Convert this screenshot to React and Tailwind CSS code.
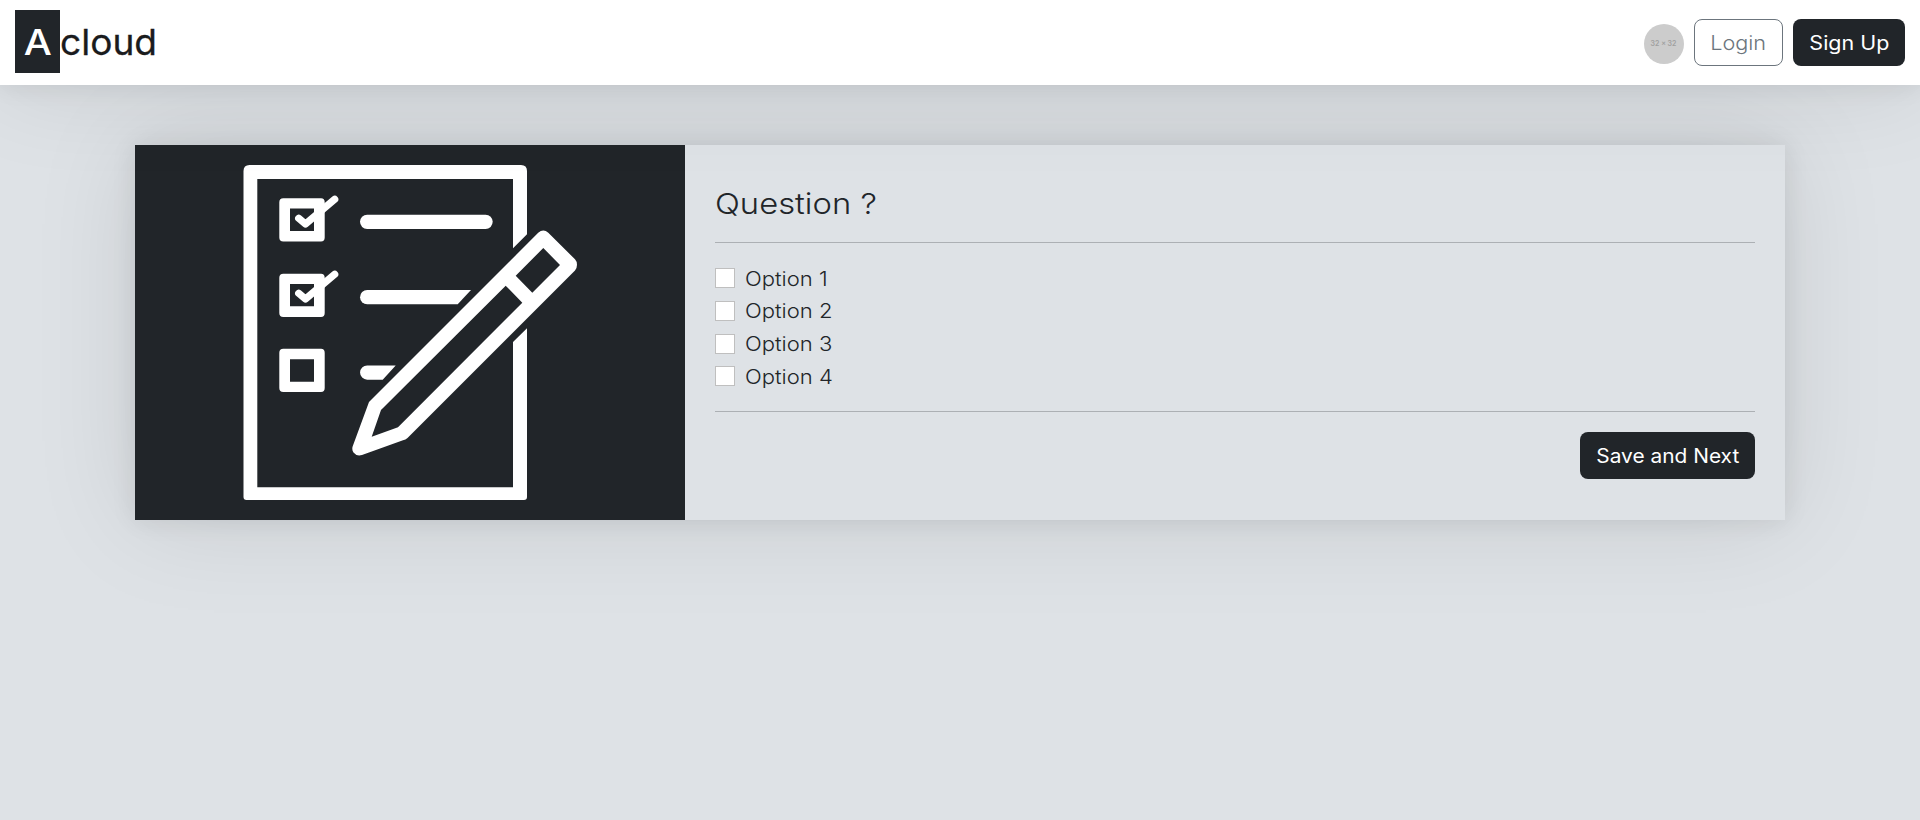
const options = ["Option 1", "Option 2", "Option 3", "Option 4"];

const SHADOW = "shadow-[0_0_24px_rgba(0,0,0,0.09),0_0_100px_rgba(0,0,0,0.10)]";

function Checklist() {
  return (
    <svg className="block h-[375px] w-[550px]" viewBox="135 145 550 375" fill="#fff">
      <path d="M249.500 165H521Q527 165 527 171V234.300L513 248.300V179H257.300V487.300H513V342L527 328.300V497Q527 500 524 500H246.500Q243.500 500 243.500 497V171Q243.500 165 249.500 165Z" />
      <g fillRule="evenodd">
        <path d="M283.300 198.300H321Q324.700 198.300 324.700 202.300V237.500Q324.700 241.500 321 241.500H283.300Q279.300 241.500 279.300 237.500V202.300Q279.300 198.300 283.300 198.300ZM290 208.500V231H314V208.500Z" />
        <path d="M283.300 273.700H321Q324.700 273.700 324.700 277.700V312.900Q324.700 316.900 321 316.900H283.300Q279.300 316.900 279.300 312.900V277.700Q279.300 273.700 283.300 273.700ZM290 284V306.200H314V284Z" />
        <path d="M283.300 348.700H321Q324.700 348.700 324.700 352.700V388.100Q324.700 392.100 321 392.100H283.300Q279.300 392.100 279.300 388.100V352.700Q279.300 348.700 283.300 348.700ZM290 359.200V381.800H314V359.200Z" />
      </g>
      <g fill="none" stroke="#fff" strokeWidth="7.200" strokeLinecap="round" strokeLinejoin="round">
        <path d="M298.700 218.300L305.500 224L334.700 199.300" />
        <path d="M298.700 293.300L305.500 299L334.700 274.300" />
      </g>
      <rect x="360" y="214.700" width="132.700" height="14.300" rx="7.150" />
      <path d="M367.200 290H471L457.700 304.300H367.200A7.150 7.150 0 0 1 367.200 290Z" />
      <path d="M367.200 365.400H395.700L382.700 379.700H367.200A7.150 7.150 0 0 1 367.200 365.400Z" />
      <path
        fillRule="evenodd"
        d="M369 402L538.200 232.800Q543.300 228.300 548.300 232.700L575 259.300Q577 261.500 577 264.700Q577 268 575 270.400L407.500 438Q405.500 439.700 403 440.300L362 455Q356.500 456.500 353.500 452.500Q351.500 449.500 352.800 446ZM381 410L371.700 436.700L398 427.200L522.300 302.700L505.700 285.700ZM543.300 248L515.700 275.700L532.300 292.700L560 265Z"
      />
    </svg>
  );
}

export default function App() {
  return (
    <div className="flex h-[820px] w-full flex-col overflow-hidden bg-[#dee2e6] font-['Inter','Noto_Sans',sans-serif] text-[19.500px] font-light text-[#212529]">
      <header className={`relative z-10 flex h-[85px] shrink-0 items-start justify-between bg-white px-[15px] ${SHADOW}`}>
        <div className="mt-[10px] flex h-[63px] items-center text-[36px] font-medium text-[#1a1b1d]">
          <span className="flex h-[63px] w-[45px] items-center justify-center bg-[#212529] text-white">
            <span className="inline-block scale-x-[1.1]">A</span>
          </span>
          <span className="inline-block origin-left scale-x-[1.03] font-normal [-webkit-text-stroke:0.3px_#1a1b1d]">cloud</span>
        </div>
        <div className="mt-[19px] flex items-start gap-[10px]">
          <span className="mt-[5px] flex size-10 items-center justify-center rounded-full bg-[#ccc] pt-px pr-px text-[7px] font-semibold text-[#a0a0a0]">
            32 x 32
          </span>
          <button className="h-[47px] w-[89px] rounded-[8px] border border-[#6c757d] pt-[3px] text-[#6c757d]">
            <span className="inline-block scale-x-[1.11]">Login</span>
          </button>
          <button className="h-[47px] w-[112px] rounded-[8px] bg-[#212529] pt-[2px] font-normal text-white">
            <span className="inline-block scale-x-[1.1]">Sign Up</span>
          </button>
        </div>
      </header>
      <main className={`mx-auto mt-[60px] flex h-[375px] w-[1650px] shrink-0 bg-[#dee2e6] ${SHADOW}`}>
        <div className="w-[550px] shrink-0 bg-[#212529]">
          <Checklist />
        </div>
        <form className="flex flex-1 flex-col px-[30px]">
          <h1 className="mt-[41px] h-[36px] text-[29px] leading-[36px]">
            <span className="inline-block origin-left scale-x-[1.13]">Question ?</span>
          </h1>
          <hr className="mt-[20px] border-[#acb0b4]" />
          <div className="mt-[19px] flex h-[131px] flex-col">
            {options.map((label) => (
              <label key={label} className="flex h-[32.700px] items-center gap-[10px]">
                <input type="checkbox" className="size-5 appearance-none border border-[#bfbfbf] bg-white" />
                <span className="inline-block origin-left scale-x-[1.13] pt-[2px]">{label}</span>
              </label>
            ))}
          </div>
          <hr className="mt-[18px] border-[#acb0b4]" />
          <button type="button" className="mt-[20px] h-[47px] w-[175px] self-end rounded-[8px] bg-[#212529] pt-[2px] font-normal text-white">
            <span className="inline-block scale-x-[1.07]">Save and Next</span>
          </button>
        </form>
      </main>
    </div>
  );
}
